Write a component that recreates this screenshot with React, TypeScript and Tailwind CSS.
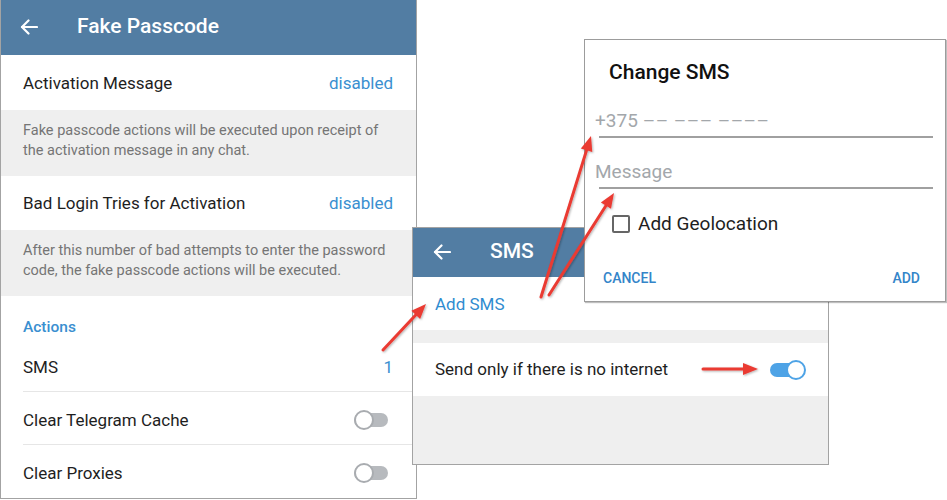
const font = { fontFamily: 'Roboto, "Noto Sans", sans-serif' };

function BackArrow() {
  return (
    <svg width="18" height="16" viewBox="0 0 18 16" fill="none" stroke="white" strokeWidth="2.2" strokeLinecap="round" strokeLinejoin="round">
      <path d="M17 8H2" />
      <path d="M8.5 1.5 2 8l6.5 6.5" />
    </svg>
  );
}

function Toggle({ on }: { on?: boolean }) {
  return (
    <div className="relative h-[20px] w-[36px]">
      <div className={`absolute left-0 top-[3px] h-[14px] w-[34px] rounded-full ${on ? 'bg-[#4ea3e6]' : 'bg-[#b7babe]'}`} />
      <div
        className={`absolute top-0 h-[20px] w-[20px] rounded-full border-2 bg-white ${on ? 'right-0 border-[#4ea3e6]' : 'left-0 border-[#a9acb0]'}`}
      />
    </div>
  );
}

function Row({ label, value, toggle, divider }: { label: string; value?: string; toggle?: boolean; divider?: boolean }) {
  return (
    <div className="relative flex h-[54px] items-center justify-between pl-[22px] pr-[23px] pt-[4px]">
      <span className="text-[17px] text-[#1e1e1e]">{label}</span>
      {value && <span className="text-[17px] text-[#3a8fd0]">{value}</span>}
      {toggle && <div className="mr-[3px]"><Toggle /></div>}
      {divider && <div className="absolute bottom-0 left-[22px] right-0 h-px bg-[#e6e6e6]" />}
    </div>
  );
}

function Hint({ children }: { children: React.ReactNode }) {
  return (
    <div className="bg-[#efefef] pb-[15px] pl-[22px] pr-[16px] pt-[11px] text-[14.5px] leading-[20px] text-[#757575]">
      {children}
    </div>
  );
}

function FakePasscode() {
  return (
    <div className="absolute left-0 top-0 flex h-[499px] w-[417px] flex-col overflow-hidden border-x border-b border-[#a3a3a3] bg-white">
      <header className="flex h-[55px] shrink-0 items-center bg-[#527da3] pb-[1px] pl-[19px]">
        <BackArrow />
        <h1 className="ml-[39px] text-[21px] font-medium text-white">Fake Passcode</h1>
      </header>
      <div className="flex h-[56px] items-center justify-between pl-[22px] pr-[23px] pt-[3px]">
        <span className="text-[17px] text-[#1e1e1e]">Activation Message</span>
        <span className="text-[17px] text-[#3a8fd0]">disabled</span>
      </div>
      <Hint>
        Fake passcode actions will be executed upon receipt of
        <br />
        the activation message in any chat.
      </Hint>
      <div className="flex h-[55px] items-center justify-between pl-[22px] pr-[23px] pt-[2px]">
        <span className="text-[17px] text-[#1e1e1e]">Bad Login Tries for Activation</span>
        <span className="text-[17px] text-[#3a8fd0]">disabled</span>
      </div>
      <Hint>
        After this number of bad attempts to enter the password
        <br />
        code, the fake passcode actions will be executed.
      </Hint>
      <div className="pl-[22px] pt-[21px] text-[15.5px] font-medium leading-[20px] text-[#3a8fd0]">Actions</div>
      <div className="h-[2px]" />
      <Row label="SMS" value="1" divider />
      <Row label="Clear Telegram Cache" toggle divider />
      <Row label="Clear Proxies" toggle />
    </div>
  );
}

function SmsScreen() {
  return (
    <div className="absolute left-[412px] top-[227px] flex h-[238px] w-[417px] flex-col overflow-hidden border border-[#a3a3a3] bg-[#efefef]">
      <header className="flex h-[49px] shrink-0 items-center bg-[#527da3] pb-[2px] pl-[20px]">
        <BackArrow />
        <h1 className="ml-[39px] text-[21px] font-medium text-white">SMS</h1>
      </header>
      <div className="flex h-[53px] items-center bg-white pl-[22px] pt-[2px] text-[17px] text-[#2f8cd0]">Add SMS</div>
      <div className="h-[13px]" />
      <div className="flex h-[53px] items-center justify-between bg-white pl-[22px] pr-[22px]">
        <span className="text-[17px] text-[#1e1e1e]">Send only if there is no internet</span>
        <Toggle on />
      </div>
    </div>
  );
}

function Dashes({ n }: { n: number }) {
  return <span className="ml-[5px] tracking-[0.5px]">{'–'.repeat(n)}</span>;
}

function ChangeSmsDialog() {
  return (
    <div className="absolute left-[584px] top-[39px] flex h-[263px] w-[362px] flex-col border border-[#9c9c9c] bg-white shadow-[1px_1px_1px_rgba(0,0,0,0.25)]">
      <h2 className="ml-[24px] mt-[20px] text-[21px] font-medium leading-[24px] text-[#111]">Change SMS</h2>
      <div className="ml-[14px] mr-[12px] mt-[25px] border-b-2 border-[#a0a0a0] pb-[3px]">
        <div className="-ml-[4px] text-[19px] leading-[24px] text-[#a3a7ab]">
          +375
          <Dashes n={2} />
          <Dashes n={3} />
          <Dashes n={4} />
        </div>
      </div>
      <div className="ml-[14px] mr-[12px] mt-[22px] border-b-2 border-[#a0a0a0] pb-[3px]">
        <div className="-ml-[4px] text-[19px] leading-[24px] text-[#a3a7ab]">Message</div>
      </div>
      <label className="ml-[27px] mt-[23px] flex h-[24px] items-center gap-[8px]">
        <span className="h-[18px] w-[18px] rounded-[2px] border-2 border-[#666]" />
        <span className="text-[19px] text-[#1e1e1e]">Add Geolocation</span>
      </label>
      <div className="mt-[32px] flex items-center justify-between pl-[18px] pr-[25px] text-[14px] font-medium leading-[20px] text-[#3485c9]">
        <span>CANCEL</span>
        <span>ADD</span>
      </div>
    </div>
  );
}

const arrows: [number, number, number, number][] = [
  [383, 350, 426, 304],
  [541, 297, 591, 136],
  [549, 295, 614, 193],
  [703, 369, 758, 369],
];

function Arrow({ a }: { a: [number, number, number, number] }) {
  const [x1, y1, x2, y2] = a;
  const len = Math.hypot(x2 - x1, y2 - y1);
  const ux = (x2 - x1) / len;
  const uy = (y2 - y1) / len;
  const hl = 15;
  const hw = 6;
  const bx = x2 - ux * hl;
  const by = y2 - uy * hl;
  const p = `${x2},${y2} ${bx - uy * hw},${by + ux * hw} ${bx + uy * hw},${by - ux * hw}`;
  return (
    <g>
      <line x1={x1} y1={y1} x2={bx + ux * 2} y2={by + uy * 2} stroke="#ea3a33" strokeWidth="3" strokeLinecap="round" />
      <polygon points={p} fill="#ea3a33" />
    </g>
  );
}

export default function App() {
  return (
    <div className="relative h-[500px] w-[947px] overflow-hidden bg-white" style={font}>
      <FakePasscode />
      <SmsScreen />
      <ChangeSmsDialog />
      <svg className="pointer-events-none absolute inset-0" width="947" height="500">
        <defs>
          <filter id="sh" x="-10%" y="-10%" width="120%" height="120%">
            <feDropShadow dx="1" dy="1" stdDeviation="0.8" floodColor="#000" floodOpacity="0.3" />
          </filter>
        </defs>
        <g filter="url(#sh)">
          {arrows.map((a, i) => (
            <Arrow key={i} a={a} />
          ))}
        </g>
      </svg>
    </div>
  );
}
